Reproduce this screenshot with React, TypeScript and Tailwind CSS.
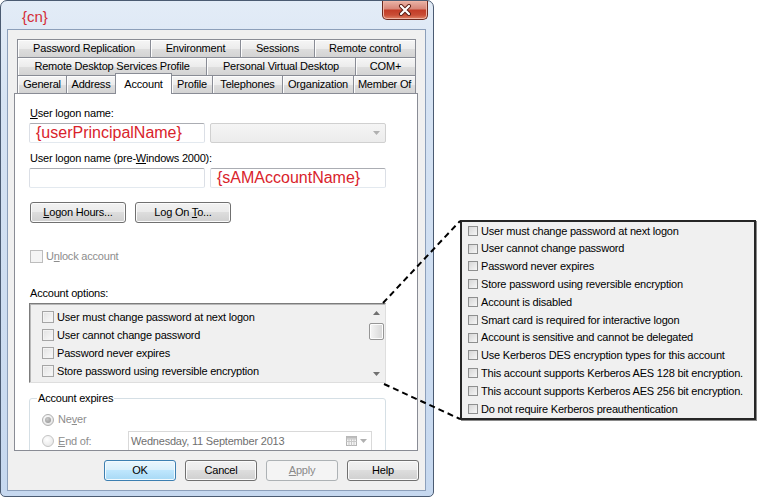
import React from 'react';

const TAB =
  'flex items-center justify-center h-[18px] border-t border-l border-[#898c95] bg-[linear-gradient(to_bottom,#f6f6f6_0%,#ececec_50%,#dedede_51%,#d3d3d3_100%)] shadow-[inset_1px_1px_0_#fdfdfd] whitespace-nowrap';

const BTN =
  'flex items-center justify-center h-[21px] rounded-[3px] border border-[#707070] bg-[linear-gradient(to_bottom,#f2f2f2_0%,#ebebeb_45%,#dddddd_50%,#cfcfcf_100%)] shadow-[inset_0_0_0_1px_#fbfbfb]';

const ROW1 = [
  { t: 'Password Replication', c: 'w-[133px]' },
  { t: 'Environment', c: 'w-[90px]' },
  { t: 'Sessions', c: 'w-[74px]' },
  { t: 'Remote control', c: 'w-[102px] border-r' },
];

const ROW2 = [
  { t: 'Remote Desktop Services Profile', c: 'w-[189px]' },
  { t: 'Personal Virtual Desktop', c: 'w-[149px]' },
  { t: 'COM+', c: 'w-[61px] border-r' },
];

const LIST = [
  'User must change password at next logon',
  'User cannot change password',
  'Password never expires',
  'Store password using reversible encryption',
];

const ALL_OPTIONS = [
  'User must change password at next logon',
  'User cannot change password',
  'Password never expires',
  'Store password using reversible encryption',
  'Account is disabled',
  'Smart card is required for interactive logon',
  'Account is sensitive and cannot be delegated',
  'Use Kerberos DES encryption types for this account',
  'This account supports Kerberos AES 128 bit encryption.',
  'This account supports Kerberos AES 256 bit encryption.',
  'Do not require Kerberos preauthentication',
];

function Arrow({ up, color = '#8a8a8a' }: { up?: boolean; color?: string }) {
  return (
    <svg width="7" height="4" viewBox="0 0 7 4">
      <path d={up ? 'M0 4L3.5 0L7 4Z' : 'M0 0L3.5 4L7 0Z'} fill={color} />
    </svg>
  );
}

function TextBox({ children }: { children?: React.ReactNode }) {
  return (
    <div className="flex items-center w-[176px] h-[20px] rounded-[2px] border border-[#abadb3] border-l-[#dbdfe6] border-r-[#dbdfe6] border-b-[#e3e9ef] bg-white pl-[6px] text-[16px] leading-[20px] tracking-normal text-[#d9232b]">
      {children}
    </div>
  );
}

function Tabs() {
  return (
    <div className="flex flex-col pl-[3px]">
      <div className="flex">
        {ROW1.map((t) => (
          <div key={t.t} className={`${TAB} ${t.c}`}>{t.t}</div>
        ))}
      </div>
      <div className="flex">
        {ROW2.map((t) => (
          <div key={t.t} className={`${TAB} ${t.c}`}>{t.t}</div>
        ))}
      </div>
      <div className="flex items-end h-[18px]">
        <div className={`${TAB} w-[49px]`}>General</div>
        <div className={`${TAB} w-[49px]`}>Address</div>
        <div className="relative z-10 -mb-px flex justify-center pt-[2px] h-[21px] w-[57px] border-t border-l border-r border-[#898c95] bg-white">
          Account
        </div>
        <div className={`${TAB} w-[41px] -ml-px`}>Profile</div>
        <div className={`${TAB} w-[70px]`}>Telephones</div>
        <div className={`${TAB} w-[71px]`}>Organization</div>
        <div className={`${TAB} w-[63px] border-r`}>Member Of</div>
      </div>
    </div>
  );
}

function Panel() {
  return (
    <div className="relative h-[358px] border border-[#898c95] bg-white overflow-hidden">
      <div className="flex flex-col pl-[14px] w-[372px]">
        <div className="mt-[12px] h-[15px] leading-[15px] pl-px">
          <u>U</u>ser logon name:
        </div>
        <div className="mt-[2px] flex gap-[5px]">
          <TextBox>{'{userPrincipalName}'}</TextBox>
          <div className="flex items-center justify-end w-[176px] h-[20px] rounded-[2px] border border-[#d0d0d0] bg-[linear-gradient(to_bottom,#f5f5f5,#ececec)] pr-[5px]">
            <Arrow color="#b0b0b0" />
          </div>
        </div>
        <div className="mt-[8px] h-[15px] leading-[15px] pl-px">
          User logon name (pre-<u>W</u>indows 2000):
        </div>
        <div className="mt-[2px] flex gap-[5px]">
          <TextBox />
          <TextBox>{'{sAMAccountName}'}</TextBox>
        </div>
        <div className="mt-[14px] flex gap-[9px] pl-px">
          <div className={`${BTN} w-[96px]`}>
            <span><u>L</u>ogon Hours...</span>
          </div>
          <div className={`${BTN} w-[96px]`}>
            <span>Log On <u>T</u>o...</span>
          </div>
        </div>
        <div className="mt-[26px] flex items-center gap-[3px] h-[15px] pl-px text-[#8d8d8d]">
          <div className="w-[13px] h-[13px] border border-[#bdbdbd] bg-[#f4f4f4]" />
          <span>U<u>n</u>lock account</span>
        </div>
        <div className="mt-[22px] h-[15px] leading-[15px] pl-px">Account options:</div>
        <div className="mt-[2px] flex w-[357px] h-[80px] border border-t-[#7c7c7c] border-l-[#7c7c7c] border-r-[#dedede] border-b-[#dedede] shadow-[inset_1px_1px_0_#b8b8b8] bg-[#f0f0f0]">
          <div className="flex-1 flex flex-col pt-[4px] pl-[12px]">
            {LIST.map((l) => (
              <div key={l} className="flex items-center gap-[3px] h-[18px]">
                <div className="w-[12px] h-[12px] border border-[#a5a5a5] bg-[linear-gradient(135deg,#e2e2e2,#fafafa)] shadow-[inset_0_0_0_1px_#f3f3f3]" />
                <span>{l}</span>
              </div>
            ))}
          </div>
          <div className="flex flex-col w-[17px] items-center">
            <div className="flex items-center justify-center h-[18px]">
              <Arrow up color="#707070" />
            </div>
            <div className="mt-px w-[15px] h-[17px] rounded-[2px] border border-[#969696] bg-[linear-gradient(to_right,#f6f6f6,#e6e6e6_50%,#d6d6d6)] shadow-[inset_0_0_0_1px_#fdfdfd]" />
            <div className="flex-1" />
            <div className="flex items-center justify-center h-[17px]">
              <Arrow color="#707070" />
            </div>
          </div>
        </div>
        <fieldset className="mt-[8px] w-[357px] h-[120px] border border-[#d5dfe5] rounded-[3px]">
          <legend className="ml-[7px] px-px leading-[15px]">Account expires</legend>
          <div className="flex flex-col pl-[12px] text-[#8d8d8d]">
            <div className="mt-[6px] flex items-center gap-[4px] h-[15px]">
              <div className="flex items-center justify-center w-[12px] h-[12px] rounded-full border border-[#b0b0b0] bg-[radial-gradient(circle_at_40%_35%,#ffffff,#dcdcdc)]">
                <div className="w-[6px] h-[6px] rounded-full bg-[radial-gradient(circle_at_40%_35%,#c8c8c8,#8f8f8f)]" />
              </div>
              <span>Ne<u>v</u>er</span>
            </div>
            <div className="mt-[4px] flex items-center h-[20px]">
              <div className="w-[12px] h-[12px] rounded-full border border-[#c4c4c4] bg-[radial-gradient(circle_at_40%_35%,#ffffff,#e2e2e2)]" />
              <span className="ml-[4px] w-[70px]"><u>E</u>nd of:</span>
              <div className="flex items-center w-[244px] h-[20px] border border-[#d9d9d9] bg-white pl-[2px] text-[#6f6f6f]">
                <span className="flex-1">Wednesday, 11 September 2013</span>
                <svg width="11" height="10" viewBox="0 0 11 10" className="mr-[3px]">
                  <rect x="0.5" y="0.5" width="10" height="9" fill="#f4f4f4" stroke="#b5b5b5" />
                  <path d="M0.5 3H10.5M0.5 5.5H10.5M3 3V9.5M5.5 3V9.5M8 3V9.5" stroke="#c8c8c8" />
                  <rect x="0.5" y="0.5" width="10" height="2" fill="#bdbdbd" />
                </svg>
                <div className="mr-[4px]">
                  <Arrow color="#b0b0b0" />
                </div>
              </div>
            </div>
          </div>
        </fieldset>
      </div>
    </div>
  );
}

function Window() {
  return (
    <div className="flex flex-col shrink-0 w-[434px] h-[497px] rounded-t-[7px] rounded-b-[5px] border border-[#4b5b72] bg-[linear-gradient(to_bottom,#e3ecf7_0%,#d6e3f3_20%,#c6d8ef_100%)]">
      <div className="flex items-start h-[28px] shrink-0">
        <span className="ml-[21px] mt-[7px] text-[15px] leading-[17px] tracking-normal text-[#d42c36]">{'{cn}'}</span>
        <div className="ml-auto mr-[5px] flex items-center justify-center w-[46px] h-[19px] rounded-b-[5px] border border-t-0 border-[#6b2a20] bg-[linear-gradient(to_bottom,#eab3a6_0%,#d8887a_42%,#c33d28_52%,#c94d36_78%,#df8468_100%)] shadow-[inset_0_0_0_1px_#f0b4a4]">
          <svg width="14" height="12" viewBox="0 0 14 12">
            <path d="M3 2L11 10M11 2L3 10" stroke="#5a1d14" strokeWidth="4" strokeLinecap="round" />
            <path d="M3 2L11 10M11 2L3 10" stroke="#ffffff" strokeWidth="2.2" strokeLinecap="round" />
          </svg>
        </div>
      </div>
      <div className="flex-1 flex flex-col ml-[6px] mr-[7px] mb-[5px] border border-[#8c9fba] bg-[#f0f0f0]">
        <div className="mt-[9px] ml-[6px] w-[404px] flex flex-col">
          <Tabs />
          <Panel />
        </div>
        <div className="mt-[9px] flex justify-end gap-[9px] pr-[6px]">
          <div className="flex items-center justify-center w-[72px] h-[21px] rounded-[3px] border border-[#3c7fb1] bg-[linear-gradient(to_bottom,#eaf6fd_0%,#d9f0fc_45%,#bee6fd_50%,#a7d9f5_100%)] shadow-[inset_0_0_0_1px_#f2fafe]">
            OK
          </div>
          <div className={`${BTN} w-[72px]`}>Cancel</div>
          <div className="flex items-center justify-center w-[72px] h-[21px] rounded-[3px] border border-[#adb2b5] bg-[#f4f4f4] text-[#8a8a8a]">
            <span><u>A</u>pply</span>
          </div>
          <div className={`${BTN} w-[72px]`}>Help</div>
        </div>
      </div>
    </div>
  );
}

export default function App() {
  return (
    <div className="relative flex items-start w-[757px] h-[499px] bg-white overflow-hidden font-['Liberation_Sans',Arial,sans-serif] text-[11px] tracking-[-0.2px] text-black">
      <Window />
      <div className="ml-[26px] mt-[220px] flex flex-col w-[296px] h-[200px] border-2 border-[#262626] bg-[#f0f0f0] shadow-[1px_1px_0_#8a8a8a]">
        {ALL_OPTIONS.map((o) => (
          <div key={o} className="flex items-center gap-[3px] h-[17.8px] pl-[6px] whitespace-nowrap">
            <div className="w-[10px] h-[10px] border border-[#8e8f8f] bg-[linear-gradient(135deg,#d6d6d6,#f6f6f6)]" />
            <span>{o}</span>
          </div>
        ))}
      </div>
      <svg className="absolute left-0 top-0 pointer-events-none" width="757" height="499">
        <line x1="383" y1="303" x2="460" y2="221" stroke="#000" strokeWidth="2" strokeDasharray="6 4" />
        <line x1="384" y1="384" x2="460" y2="419" stroke="#000" strokeWidth="2" strokeDasharray="6 4" />
      </svg>
    </div>
  );
}
